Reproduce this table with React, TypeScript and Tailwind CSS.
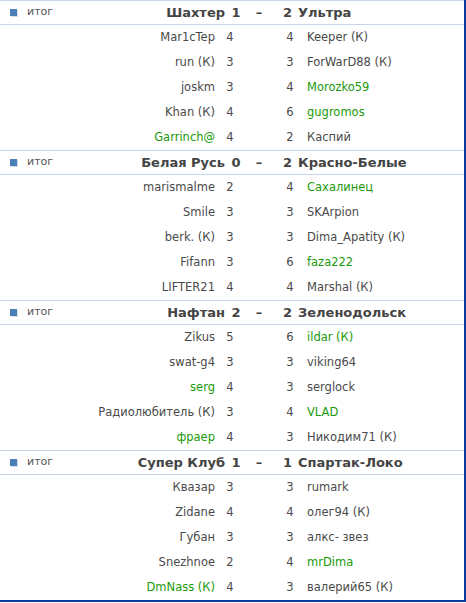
import React from 'react'

type Player = { name: string; score: number; green?: boolean }
type Match = {
  home: string
  away: string
  homeGoals: number
  awayGoals: number
  rows: [Player, Player][]
}

const matches: Match[] = [
  {
    home: 'Шахтер',
    away: 'Ультра',
    homeGoals: 1,
    awayGoals: 2,
    rows: [
      [{ name: 'Mar1cTep', score: 4 }, { name: 'Keeper (К)', score: 4 }],
      [{ name: 'run (К)', score: 3 }, { name: 'ForWarD88 (К)', score: 3 }],
      [{ name: 'joskm', score: 3 }, { name: 'Morozko59', score: 4, green: true }],
      [{ name: 'Khan (К)', score: 4 }, { name: 'gugromos', score: 6, green: true }],
      [{ name: 'Garrinch@', score: 4, green: true }, { name: 'Каспий', score: 2 }],
    ],
  },
  {
    home: 'Белая Русь',
    away: 'Красно-Белые',
    homeGoals: 0,
    awayGoals: 2,
    rows: [
      [{ name: 'marismalme', score: 2 }, { name: 'Сахалинец', score: 4, green: true }],
      [{ name: 'Smile', score: 3 }, { name: 'SKArpion', score: 3 }],
      [{ name: 'berk. (К)', score: 3 }, { name: 'Dima_Apatity (К)', score: 3 }],
      [{ name: 'Fifann', score: 3 }, { name: 'faza222', score: 6, green: true }],
      [{ name: 'LIFTER21', score: 4 }, { name: 'Marshal (К)', score: 4 }],
    ],
  },
  {
    home: 'Нафтан',
    away: 'Зеленодольск',
    homeGoals: 2,
    awayGoals: 2,
    rows: [
      [{ name: 'Zikus', score: 5 }, { name: 'ildar (К)', score: 6, green: true }],
      [{ name: 'swat-g4', score: 3 }, { name: 'viking64', score: 3 }],
      [{ name: 'serg', score: 4, green: true }, { name: 'serglock', score: 3 }],
      [{ name: 'Радиолюбитель (К)', score: 3 }, { name: 'VLAD', score: 4, green: true }],
      [{ name: 'фраер', score: 4, green: true }, { name: 'Никодим71 (К)', score: 3 }],
    ],
  },
  {
    home: 'Супер Клуб',
    away: 'Спартак-Локо',
    homeGoals: 1,
    awayGoals: 1,
    rows: [
      [{ name: 'Квазар', score: 3 }, { name: 'rumark', score: 3 }],
      [{ name: 'Zidane', score: 4 }, { name: 'олег94 (К)', score: 4 }],
      [{ name: 'Губан', score: 3 }, { name: 'алкс- звез', score: 3 }],
      [{ name: 'Snezhnoe', score: 2 }, { name: 'mrDima', score: 4, green: true }],
      [{ name: 'DmNass (К)', score: 4, green: true }, { name: 'валерий65 (К)', score: 3 }],
    ],
  },
]

function MatchBlock({ match }: { match: Match }) {
  return (
    <div>
      {/* header */}
      <div className="flex items-center h-[25px] border-t border-b border-[#c9d5ec] text-[#444]">
        <div className="w-[225px] flex items-center">
          <span className="ml-[10px] w-[7px] h-[7px] bg-[#4a7fb8] shadow-[1px_1px_0_#d6deea]" />
          <span className="ml-[10px] text-[11px] text-[#555]">итог</span>
          <span className="ml-auto font-bold text-[13px]">{match.home}</span>
        </div>
        <div className="w-[22px] text-center font-bold text-[13px]">{match.homeGoals}</div>
        <div className="w-[24px] text-center font-bold text-[13px]">–</div>
        <div className="w-[21px] text-right font-bold text-[13px]">{match.awayGoals}</div>
        <div className="pl-[6px] font-bold text-[13px]">{match.away}</div>
      </div>
      {/* players */}
      {match.rows.map(([l, r], i) => (
        <div key={i} className="flex items-center h-[25px] pt-[1px] text-[11.5px] text-[#4a4a4a]">
          <div className={`w-[215px] text-right ${l.green ? 'text-[#1a9a0a]' : ''}`}>{l.name}</div>
          <div className="w-[30px] text-center">{l.score}</div>
          <div className="w-[30px]" />
          <div className="w-[30px] text-center">{r.score}</div>
          <div className={`pl-[2px] ${r.green ? 'text-[#1a9a0a]' : ''}`}>{r.name}</div>
        </div>
      ))}
    </div>
  )
}

export default function App() {
  return (
    <div className="w-[466px] h-[603px] bg-white font-['DejaVu_Sans',sans-serif]">
      <div className="w-[466px] border-r-2 border-b-2 border-[#0b3a9e]">
        {matches.map((m, i) => (
          <MatchBlock key={i} match={m} />
        ))}
      </div>
    </div>
  )
}
